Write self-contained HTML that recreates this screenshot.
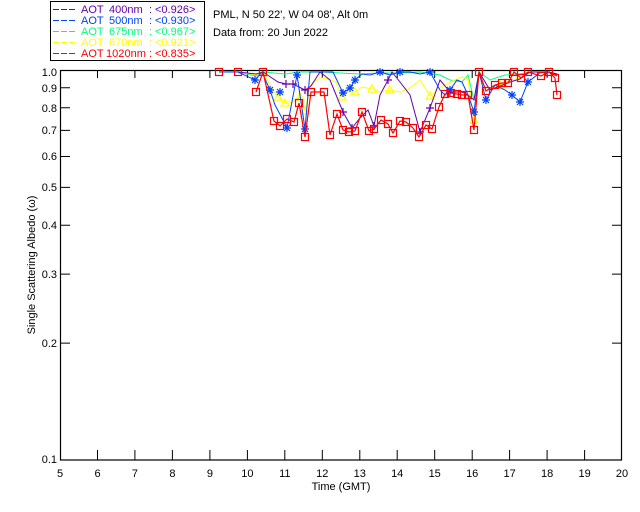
<!DOCTYPE html>
<html><head><meta charset="utf-8"><style>
html,body{margin:0;padding:0;background:#fff;width:640px;height:512px;overflow:hidden}
svg{display:block}
text{font-family:"Liberation Sans",sans-serif;font-size:11px}
</style></head><body>
<svg width="640" height="512" viewBox="0 0 640 512" xmlns="http://www.w3.org/2000/svg">
<defs>
<g id="sq"><rect x="-3.5" y="-3.5" width="7" height="7" fill="none" stroke="#f00" stroke-width="1.2"/></g>
<g id="st" stroke="#0040ff" stroke-width="1.2"><path d="M-4 0H4M0 -4V4M-3 -3L3 3M-3 3L3 -3"/></g>
<g id="pl" stroke="#6600aa" stroke-width="1.2"><path d="M-4 0H4M0 -4V4"/></g>
<g id="tr"><path d="M-4 3L0 -4L4 3Z" fill="none" stroke="#ff0" stroke-width="1.2"/></g>
</defs>
<!-- legend -->
<rect x="50.5" y="1.5" width="154" height="59" fill="none" stroke="#000"/>
<g stroke-dasharray="6,2" stroke-width="1">
<path d="M53 9.5h22" stroke="#6600aa"/>
<path d="M53 20.5h22" stroke="#0040ff"/>
<path d="M53 31.5h22" stroke="#00ff80"/>
<path d="M53 42.5h22" stroke="#ffff00"/>
<path d="M53 53.5h22" stroke="#ff0000"/>
</g>
<g font-size="11">
<g fill="#6600aa"><text x="81" y="13">AOT</text><text x="109" y="13">400nm</text><text x="149" y="13">:</text><text x="155" y="13">&lt;0.926&gt;</text></g>
<g fill="#0040ff"><text x="81" y="24">AOT</text><text x="109" y="24">500nm</text><text x="149" y="24">:</text><text x="155" y="24">&lt;0.930&gt;</text></g>
<g fill="#00ff80"><text x="81" y="35">AOT</text><text x="109" y="35">675nm</text><text x="149" y="35">:</text><text x="155" y="35">&lt;0.967&gt;</text></g>
<g fill="#ffff00"><text x="81" y="46">AOT</text><text x="109" y="46">870nm</text><text x="149" y="46">:</text><text x="155" y="46">&lt;0.921&gt;</text></g>
<g fill="#ff0000"><text x="81" y="57">AOT</text><text x="106" y="57" textLength="40" lengthAdjust="spacingAndGlyphs">1020nm</text><text x="149" y="57">:</text><text x="155" y="57">&lt;0.835&gt;</text></g>
</g>
<text x="213" y="18" fill="#000">PML, N 50 22', W 04 08', Alt 0m</text>
<text x="213" y="36" fill="#000">Data from: 20 Jun 2022</text>
<!-- axes -->
<rect x="60.5" y="70.5" width="561" height="389.5" fill="none" stroke="#000" stroke-width="1.2"/>
<g stroke="#000" stroke-width="1">
<path d="M60 87.8h10M60 107.8h10M60 130.4h10M60 156.5h10M60 187.4h10M60 225.2h10M60 274.1h10M60 343.1h10"/>
<path d="M612 87.8h10M612 107.8h10M612 130.4h10M612 156.5h10M612 187.4h10M612 225.2h10M612 274.1h10M612 343.1h10"/>
<path d="M97.5 70v8M134.9 70v8M172.4 70v8M209.9 70v8M247.4 70v8M284.8 70v8M322.3 70v8M359.8 70v8M397.2 70v8M434.7 70v8M472.2 70v8M509.6 70v8M547.1 70v8M584.6 70v8"/>
<path d="M97.5 460v-10M134.9 460v-10M172.4 460v-10M209.9 460v-10M247.4 460v-10M284.8 460v-10M322.3 460v-10M359.8 460v-10M397.2 460v-10M434.7 460v-10M472.2 460v-10M509.6 460v-10M547.1 460v-10M584.6 460v-10"/>
</g>
<g text-anchor="end" font-size="11">
<text x="57" y="76">1.0</text><text x="57" y="92">0.9</text><text x="57" y="112">0.8</text>
<text x="57" y="134">0.7</text><text x="57" y="160">0.6</text><text x="57" y="191">0.5</text>
<text x="57" y="229">0.4</text><text x="57" y="278">0.3</text><text x="57" y="347">0.2</text>
<text x="57" y="463">0.1</text>
</g>
<g text-anchor="middle" font-size="11">
<text x="60" y="477">5</text><text x="97.5" y="477">6</text><text x="134.9" y="477">7</text><text x="172.4" y="477">8</text>
<text x="209.9" y="477">9</text><text x="247.4" y="477">10</text><text x="284.8" y="477">11</text><text x="322.3" y="477">12</text>
<text x="359.8" y="477">13</text><text x="397.2" y="477">14</text><text x="434.7" y="477">15</text><text x="472.2" y="477">16</text>
<text x="509.6" y="477">17</text><text x="547.1" y="477">18</text><text x="584.6" y="477">19</text><text x="622" y="477">20</text>
<text x="341" y="490">Time (GMT)</text>
</g>
<text transform="translate(35,265) rotate(-90)" text-anchor="middle" font-size="11">Single Scattering Albedo (ω)</text>
<!-- green -->
<polyline fill="none" stroke="#00ff80" points="219,72 238,72 256,76 263,72 274,73 285,74 300,72 311,72 324,72 340,73 360,74 380,73 400,73 420,72 440,75 450,80 462,82 468,75 474,100 479,72 490,80 505,75 520,74 530,72 549,72 557,74"/>
<!-- yellow -->
<polyline fill="none" stroke="#ffff00" points="219,72 238,72 256,75 263,72 270,85 278,97 285,103 292,103 300,97 305,111 311,84 320,78 324,78 336,82 342,97 348,92 355,92 362,87 372,89 380,92 390,90 400,92 410,88 420,80 430,96 440,88 450,82 462,77 468,79 474,120 479,72 490,90 500,85 510,80 520,78 530,72 549,72 557,74"/>
<g><use href="#tr" x="278" y="97"/><use href="#tr" x="285" y="103"/><use href="#tr" x="300" y="97"/><use href="#tr" x="305" y="111"/><use href="#tr" x="342" y="97"/><use href="#tr" x="355" y="92"/><use href="#tr" x="372" y="89"/><use href="#tr" x="390" y="90"/><use href="#tr" x="430" y="96"/><use href="#tr" x="474" y="120"/><use href="#tr" x="500" y="85"/></g>
<!-- purple -->
<polyline fill="none" stroke="#6600aa" points="219,72 238,72 256,74 263,72 278,82 286,84 293,84 305,90 311,86 320,72 330,80 343,112 352,128 360,118 368,110 374,126 380,95 388,80 392,72 400,82 410,95 420,132 430,108 440,80 450,92 462,92 468,95 474,100 479,72 490,90 500,86 510,82 520,79 530,72 549,72 557,74"/>
<g fill="none"><use href="#pl" x="286" y="84"/><use href="#pl" x="293" y="84"/><use href="#pl" x="305" y="90"/><use href="#pl" x="343" y="112"/><use href="#pl" x="352" y="128"/><use href="#pl" x="374" y="126"/><use href="#pl" x="388" y="80"/><use href="#pl" x="420" y="132"/><use href="#pl" x="430" y="108"/><use href="#pl" x="450" y="92"/></g>
<!-- blue -->
<polyline fill="none" stroke="#0040ff" points="219,72 238,72 255,80 262,72 270,90 275,105 283,120 287,128 297,75 305,129 310,72 325,72 333,72 343,93 350,88 355,80 362,74 370,75 380,72 390,75 400,72 410,72 420,74 430,72 440,90 445,95 450,90 457,80 462,82 468,95 474,112 479,72 486,100 495,85 505,90 512,95 520,102 528,82 541,72 549,72 557,76"/>
<g><use href="#st" x="255" y="80"/><use href="#st" x="270" y="90"/><use href="#st" x="280" y="92"/><use href="#st" x="287" y="128"/><use href="#st" x="297" y="75"/><use href="#st" x="305" y="129"/><use href="#st" x="343" y="93"/><use href="#st" x="350" y="88"/><use href="#st" x="355" y="80"/><use href="#st" x="380" y="72"/><use href="#st" x="400" y="72"/><use href="#st" x="430" y="72"/><use href="#st" x="450" y="90"/><use href="#st" x="474" y="112"/><use href="#st" x="486" y="100"/><use href="#st" x="512" y="95"/><use href="#st" x="520" y="102"/><use href="#st" x="528" y="82"/></g>
<!-- red -->
<polyline fill="none" stroke="#ff0000" stroke-width="1.2" points="256,92 263,72 274,121 280,126 287,119 294,122 299,103 305,137 311,92 324,92 330,135 337,114 343,130 349,132 355,131 362,112 369,131 374,129 381,120 388,124 393,133 400,121 406,122 413,128 419,137 426,125 432,129 439,107 445,94 451,93 457,94 462,95 468,95 474,130 479,72 486,91 495,85 502,83 508,83 514,72 521,78 528,72 541,76 549,72 555,78 557,95"/>
<g><use href="#sq" x="219" y="72"/><use href="#sq" x="238" y="72"/><use href="#sq" x="256" y="92"/><use href="#sq" x="263" y="72"/><use href="#sq" x="274" y="121"/><use href="#sq" x="280" y="126"/><use href="#sq" x="287" y="119"/><use href="#sq" x="294" y="122"/><use href="#sq" x="299" y="103"/><use href="#sq" x="305" y="137"/><use href="#sq" x="311" y="92"/><use href="#sq" x="324" y="92"/><use href="#sq" x="330" y="135"/><use href="#sq" x="337" y="114"/><use href="#sq" x="343" y="130"/><use href="#sq" x="349" y="132"/><use href="#sq" x="355" y="131"/><use href="#sq" x="362" y="112"/><use href="#sq" x="369" y="131"/><use href="#sq" x="374" y="129"/><use href="#sq" x="381" y="120"/><use href="#sq" x="388" y="124"/><use href="#sq" x="393" y="133"/><use href="#sq" x="400" y="121"/><use href="#sq" x="406" y="122"/><use href="#sq" x="413" y="128"/><use href="#sq" x="419" y="137"/><use href="#sq" x="426" y="125"/><use href="#sq" x="432" y="129"/><use href="#sq" x="439" y="107"/><use href="#sq" x="445" y="94"/><use href="#sq" x="451" y="93"/><use href="#sq" x="457" y="94"/><use href="#sq" x="462" y="95"/><use href="#sq" x="468" y="95"/><use href="#sq" x="474" y="130"/><use href="#sq" x="479" y="72"/><use href="#sq" x="486" y="91"/><use href="#sq" x="495" y="85"/><use href="#sq" x="502" y="83"/><use href="#sq" x="508" y="83"/><use href="#sq" x="514" y="72"/><use href="#sq" x="521" y="78"/><use href="#sq" x="528" y="72"/><use href="#sq" x="541" y="76"/><use href="#sq" x="549" y="72"/><use href="#sq" x="555" y="78"/><use href="#sq" x="557" y="95"/></g>
</svg>
</body></html>
